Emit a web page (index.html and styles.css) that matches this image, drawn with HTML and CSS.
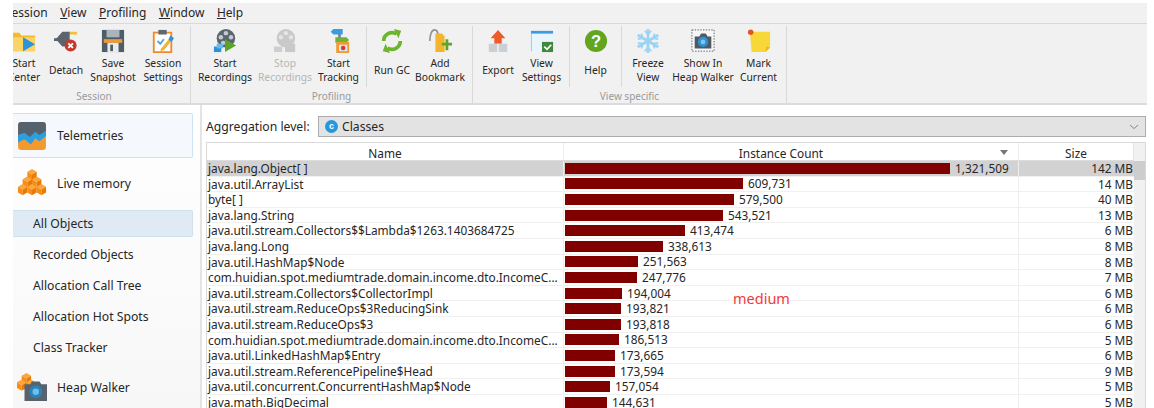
FILE: index.html
```html
<!DOCTYPE html>
<html lang="en">
<head>
<meta charset="utf-8">
<title>Live memory - All Objects</title>
<link rel="stylesheet" href="styles.css">
</head>
<body>
<svg class="defs" width="0" height="0" aria-hidden="true">
  <defs>
    <g id="cube">
      <path d="M0 3l5-3 5 3-5 3z" fill="#fca63e"/>
      <path d="M0 3l5 3v6L0 9z" fill="#f78d14"/>
      <path d="M10 3L5 6v6l5-3z" fill="#e97a08"/>
    </g>
  </defs>
</svg>
<div class="app">
  <nav class="menubar">
    <span class="menu first"><u>S</u>ession</span>
    <span class="menu"><u>V</u>iew</span>
    <span class="menu"><u>P</u>rofiling</span>
    <span class="menu"><u>W</u>indow</span>
    <span class="menu"><u>H</u>elp</span>
  </nav>
  <div class="toolbar">
    <section class="group g-session">
      <div class="tools">
        <div class="tool w48 lead">
          <svg class="ico" viewBox="0 0 26 26"><path d="M0 4h8l2 3h15v17H0z" fill="#f6b92c"/><path d="M0 9h25v15H0z" fill="#fbd468"/><path d="M12 9l13 7.500-13 7.500z" fill="#2c93d8"/></svg>
          <div class="lbl">Start<br>Center</div>
        </div>
        <div class="tool w42">
          <svg class="ico" viewBox="0 0 26 26"><path d="M15 3h10v3H15z" fill="#f0c040"/><path d="M2 11l7-8h8v16H9z" fill="#5b636b"/><path d="M0 10h4v3H0z" fill="#5b636b"/><circle cx="18" cy="18" r="6.500" fill="#c9372c"/><path d="M15.500 15.500l5 5m0-5l-5 5" stroke="#fff" stroke-width="2"/></svg>
          <div class="lbl">Detach</div>
        </div>
        <div class="tool w52">
          <svg class="ico" viewBox="0 0 26 26"><path d="M1 1h24v24H1z" fill="#4e5d68"/><path d="M6 1h14v8H6z" fill="#aab4bb"/><path d="M3 11h20v4H3z" fill="#f29a2e"/><path d="M7 15h12v10H7z" fill="#e8ecee"/><path d="M10 17h3v7h-3z" fill="#4e5d68"/></svg>
          <div class="lbl">Save<br>Snapshot</div>
        </div>
        <div class="tool w48">
          <svg class="ico" viewBox="0 0 26 26"><path d="M3 4h19v21H3z" fill="#fff" stroke="#ee8a2a" stroke-width="2"/><path d="M8 1h9v5H8z" fill="#5d6a73"/><path d="M7 13l3 3 4-5" fill="none" stroke="#56a8d8" stroke-width="2"/><path d="M11 21l9-11 3 2-9 11-4 1z" fill="#f3b23b"/><path d="M19 11l2-4 4 3-3 4z" fill="#2c93d8"/></svg>
          <div class="lbl">Session<br>Settings</div>
        </div>
      </div>
      <div class="grouplabel shift">Session</div>
    </section>
    <section class="group g-profiling">
      <div class="tools">
        <div class="tool w68">
          <svg class="ico" viewBox="0 0 26 26"><circle cx="14" cy="10" r="10" fill="#5a666e"/><circle cx="14" cy="4.500" r="2.400" fill="#c5ccd1"/><circle cx="8.500" cy="9" r="2.400" fill="#c5ccd1"/><circle cx="19.500" cy="9" r="2.400" fill="#c5ccd1"/><circle cx="11" cy="15" r="2.400" fill="#c5ccd1"/><path d="M13 11l12 7-12 7z" fill="#5ba525"/><path d="M1 19h8v6H1z" fill="#2c93d8"/><path d="M4 16h7v5H4z" fill="#6cb8e6"/></svg>
          <div class="lbl">Start<br>Recordings</div>
        </div>
        <div class="tool w52 disabled">
          <svg class="ico" viewBox="0 0 26 26"><circle cx="14" cy="10" r="10" fill="#c9c9c9"/><circle cx="14" cy="4.500" r="2.400" fill="#e4e4e4"/><circle cx="8.500" cy="9" r="2.400" fill="#e4e4e4"/><circle cx="19.500" cy="9" r="2.400" fill="#e4e4e4"/><path d="M1 19h9v6H1z" fill="#cfcfcf"/><path d="M13 16h11v9H13z" fill="#c9c9c9"/></svg>
          <div class="lbl">Stop<br>Recordings</div>
        </div>
        <div class="tool w56 sep">
          <svg class="ico" viewBox="0 0 26 26"><path d="M12 0h3v26h-3z" fill="#7b858c"/><path d="M4 3l3-3h10v6H7z" fill="#3a9be0"/><path d="M9 9h12l3 3-3 3H9z" fill="#6fb23a"/><path d="M10 14h14v12H10z" fill="#f09a35"/><path d="M13 17h9v7h-9z" fill="#d8e6f0"/><circle cx="17.500" cy="20.500" r="2.400" fill="#d9342b"/></svg>
          <div class="lbl">Start<br>Tracking</div>
        </div>
        <div class="tool w50">
          <svg class="ico" viewBox="0 0 26 26"><path d="M4 13a9 9 0 0 1 14-7.500" fill="none" stroke="#6db52d" stroke-width="4"/><path d="M22 13a9 9 0 0 1-14 7.500" fill="none" stroke="#6db52d" stroke-width="4"/><path d="M15 0l8 2-3 8z" fill="#6db52d"/><path d="M11 26l-8-2 3-8z" fill="#6db52d"/></svg>
          <div class="lbl">Run GC</div>
        </div>
        <div class="tool w46">
          <svg class="ico" viewBox="0 0 26 26"><path d="M2 13c0-7 2-12 5-12s4 4 4 7" fill="none" stroke="#8a9399" stroke-width="1.800"/><path d="M8 5h7l3 3v17H8z" fill="#f4b52e"/><path d="M15 15h4v-4h3v4h4v3h-4v5h-3v-5h-4z" fill="#5fa52a"/></svg>
          <div class="lbl">Add<br>Bookmark</div>
        </div>
      </div>
      <div class="grouplabel">Profiling</div>
    </section>
    <section class="group g-view">
      <div class="tools">
        <div class="tool w50">
          <svg class="ico" viewBox="0 0 26 26"><path d="M13 1l8 9h-4v6H9v-6H5z" fill="#ef5a2a"/><path d="M3 16h20v9H3z" fill="#c9cfd2"/><path d="M12 16h2v9h-2z" fill="#e8ecee"/></svg>
          <div class="lbl">Export</div>
        </div>
        <div class="tool w47 sep inset">
          <svg class="ico" viewBox="0 0 26 26"><path d="M1 2h24v22H1z" fill="#e9f5fc"/><path d="M1 2h24v3H1z" fill="#3a9be0"/><path d="M1 5h1v19H1z" fill="#8ccaee"/><path d="M13 14h12v11H13z" fill="#3f8a3a"/><path d="M15.500 19l3 3 4.500-5" fill="none" stroke="#fff" stroke-width="1.800"/></svg>
          <div class="lbl">View<br>Settings</div>
        </div>
        <div class="tool w52 sep">
          <svg class="ico" viewBox="0 0 26 26"><circle cx="13" cy="13" r="12" fill="#63a61e"/><text class="qm" x="13" y="19" text-anchor="middle">?</text></svg>
          <div class="lbl">Help</div>
        </div>
        <div class="tool w52">
          <svg class="ico" viewBox="0 0 26 26"><g stroke="#9ad4f2" stroke-width="3" fill="none"><path d="M13 0v26M1.700 6.500l22.600 13M1.700 19.500l22.600-13"/><path d="M9.500 2l3.500 3.500L16.500 2M9.500 24l3.500-3.500 3.500 3.500M2 11l5-1-1-5M24 15l-5 1 1 5M2 15l5 1-1 5M24 11l-5-1 1-5" stroke-width="2"/></g></svg>
          <div class="lbl">Freeze<br>View</div>
        </div>
        <div class="tool w58">
          <svg class="ico" viewBox="0 0 26 26"><rect x="1" y="1" width="24" height="23" fill="#f6f6f6" stroke="#555" stroke-dasharray="1.500 1.500"/><path d="M4 8h5l2-3h5l2 3h4v13H4z" fill="#4d5a64"/><circle cx="13" cy="14" r="5.500" fill="#2c93d8"/><circle cx="13" cy="14" r="2.500" fill="#7cc6f0"/></svg>
          <div class="lbl">Show In<br>Heap Walker</div>
        </div>
        <div class="tool w53">
          <svg class="ico" viewBox="0 0 26 26"><path d="M3 3h22v17l-5 5H5z" fill="#f8d838"/><path d="M20 25l1-6 4 1z" fill="#e8b820"/><circle cx="4" cy="3.500" r="3" fill="#e0562a"/></svg>
          <div class="lbl">Mark<br>Current</div>
        </div>
      </div>
      <div class="grouplabel">View specific</div>
    </section>
  </div>
  <div class="main">
    <aside class="sidebar">
      <div class="side selected">
        <svg class="side-ico" viewBox="0 0 28 28"><rect x="1" y="1" width="26" height="26" rx="3" fill="#f29a2e"/><path d="M1 4a3 3 0 0 1 3-3h20a3 3 0 0 1 3 3v9l-5 3-4-3-5 5-5-4-7 3z" fill="#55626c"/><path d="M1 13l6-2 5 4 5-5 4 3 6-4v5l-6 5-4-3-4 6-6-5-6 3z" fill="#2c9fe0"/></svg>
        <span>Telemetries</span>
      </div>
      <div class="side big">
        <svg class="side-ico" viewBox="0 0 32 30"><use href="#cube" x="11" y="0"/><use href="#cube" x="6" y="8"/><use href="#cube" x="16" y="8"/><use href="#cube" x="1" y="16"/><use href="#cube" x="11" y="16"/><use href="#cube" x="21" y="16"/></svg>
        <span>Live memory</span>
      </div>
      <div class="sub current">All Objects</div>
      <div class="sub">Recorded Objects</div>
      <div class="sub">Allocation Call Tree</div>
      <div class="sub">Allocation Hot Spots</div>
      <div class="sub">Class Tracker</div>
      <div class="side heap">
        <svg class="side-ico" viewBox="0 0 32 30"><use href="#cube" x="5" y="0"/><use href="#cube" x="0" y="7"/><use href="#cube" x="10" y="7"/><path d="M8 12h6l2-3h8l2 3h6v18H8z" fill="#56636d"/><circle cx="20" cy="20" r="7" fill="#2c82b8"/><circle cx="20" cy="20" r="3.500" fill="#6cc0ec"/></svg>
        <span>Heap Walker</span>
      </div>
    </aside>
    <main class="content">
      <div class="agg">
        <label class="agg-label">Aggregation level:</label>
        <div class="combo">
          <span class="badge">c</span>
          <span>Classes</span>
          <svg class="chev" viewBox="0 0 10 6"><path d="M1 1l4 3.500L9 1" fill="none" stroke="#888" stroke-width="1"/></svg>
        </div>
      </div>
      <div class="table">
        <div class="cols">
          <div class="head">
            <div class="c-name th">Name</div>
            <div class="c-count th">Instance Count<span class="sort"></span></div>
            <div class="c-size th">Size</div>
          </div>
          <div class="row hot"><div class="c-name">java.lang.Object[ ]</div><div class="c-count"><i class="bar" style="width:385px"></i>1,321,509</div><div class="c-size">142 MB</div></div>
          <div class="row"><div class="c-name">java.util.ArrayList</div><div class="c-count"><i class="bar" style="width:178px"></i>609,731</div><div class="c-size">14 MB</div></div>
          <div class="row"><div class="c-name">byte[ ]</div><div class="c-count"><i class="bar" style="width:169px"></i>579,500</div><div class="c-size">40 MB</div></div>
          <div class="row"><div class="c-name">java.lang.String</div><div class="c-count"><i class="bar" style="width:158px"></i>543,521</div><div class="c-size">13 MB</div></div>
          <div class="row"><div class="c-name">java.util.stream.Collectors$$Lambda$1263.1403684725</div><div class="c-count"><i class="bar" style="width:120px"></i>413,474</div><div class="c-size">6 MB</div></div>
          <div class="row"><div class="c-name">java.lang.Long</div><div class="c-count"><i class="bar" style="width:98px"></i>338,613</div><div class="c-size">8 MB</div></div>
          <div class="row"><div class="c-name">java.util.HashMap$Node</div><div class="c-count"><i class="bar" style="width:73px"></i>251,563</div><div class="c-size">8 MB</div></div>
          <div class="row"><div class="c-name">com.huidian.spot.mediumtrade.domain.income.dto.IncomeC...</div><div class="c-count"><i class="bar" style="width:72px"></i>247,776</div><div class="c-size">7 MB</div></div>
          <div class="row"><div class="c-name">java.util.stream.Collectors$CollectorImpl</div><div class="c-count"><i class="bar" style="width:57px"></i>194,004</div><div class="c-size">6 MB</div></div>
          <div class="row"><div class="c-name">java.util.stream.ReduceOps$3ReducingSink</div><div class="c-count"><i class="bar" style="width:56px"></i>193,821</div><div class="c-size">6 MB</div></div>
          <div class="row"><div class="c-name">java.util.stream.ReduceOps$3</div><div class="c-count"><i class="bar" style="width:56px"></i>193,818</div><div class="c-size">6 MB</div></div>
          <div class="row"><div class="c-name">com.huidian.spot.mediumtrade.domain.income.dto.IncomeC...</div><div class="c-count"><i class="bar" style="width:54px"></i>186,513</div><div class="c-size">5 MB</div></div>
          <div class="row"><div class="c-name">java.util.LinkedHashMap$Entry</div><div class="c-count"><i class="bar" style="width:50px"></i>173,665</div><div class="c-size">6 MB</div></div>
          <div class="row"><div class="c-name">java.util.stream.ReferencePipeline$Head</div><div class="c-count"><i class="bar" style="width:50px"></i>173,594</div><div class="c-size">9 MB</div></div>
          <div class="row"><div class="c-name">java.util.concurrent.ConcurrentHashMap$Node</div><div class="c-count"><i class="bar" style="width:45px"></i>157,054</div><div class="c-size">5 MB</div></div>
          <div class="row"><div class="c-name">java.math.BigDecimal</div><div class="c-count"><i class="bar" style="width:42px"></i>144,631</div><div class="c-size">5 MB</div></div>
        </div>
        <div class="scrollbar"><div class="thumb"></div></div>
        <span class="note">medium</span>
      </div>
    </main>
  </div>
</div>
</body>
</html>
```
FILE: styles.css
```css
html, body { margin: 0; height: 100%; background: #fff; }
body { overflow: hidden; font-family: "Noto Sans", "Open Sans", sans-serif; color: #262626; }
.defs { position: absolute; }
.app { width: 1134px; height: 408px; margin-left: 13px; padding-top: 3px; box-sizing: border-box; overflow: hidden; display: flex; flex-direction: column; }

.menubar { height: 20px; flex: none; display: flex; align-items: center; background: #f1f1f1; border-bottom: 1px solid #d9d9d9; font-size: 12px; line-height: 20px; gap: 12.5px; }
.menu u { text-decoration: underline; }
.menu.first { margin-left: -8px; }

.toolbar { height: 81px; flex: none; display: flex; background: #f1f1f1; border-bottom: 2px solid #dcdcdc; box-sizing: border-box; font-size: 10.3px; line-height: 14px; }
.group { display: flex; flex-direction: column; border-right: 1px solid #d8d8d8; margin-top: 2px; height: 77px; }
.g-session { width: 177px; }
.g-session .tools { margin-left: -16px; }
.g-profiling { width: 281px; }
.g-view { width: 313px; }
.tools { display: flex; height: 62px; }
.tool { flex: none; display: flex; flex-direction: column; align-items: center; box-sizing: border-box; white-space: nowrap; }
.tool.lead { padding-left: 6px; }
.tool.sep { border-right: 1px solid #d8d8d8; }
.tool.inset { padding-right: 9px; }
.disabled { color: #b5b5b5; }
.w42 { width: 42px; } .w46 { width: 46px; } .w47 { width: 47px; } .w48 { width: 48px; } .w50 { width: 50px; } .w52 { width: 52px; } .w53 { width: 53px; } .w56 { width: 56px; } .w58 { width: 58px; } .w68 { width: 68px; }
.ico { width: 24px; height: 24px; flex: none; margin-top: 3px; overflow: hidden; }
.lbl { height: 28px; margin-top: 3px; display: flex; align-items: center; justify-content: center; text-align: center; }
.grouplabel { text-align: center; font-size: 10px; color: #9a9a9a; line-height: 14px; margin-top: 2px; }
.grouplabel.shift { margin-left: -15px; }
.qm { font: 700 18px "Liberation Sans", sans-serif; fill: #fff; }

.main { flex: 1; display: flex; min-height: 0; }
.sidebar { width: 189px; flex: none; background: linear-gradient(#fff, #f7f7f7); border-right: 2px solid #e4e4e4; padding: 8px 7px 0 0; box-sizing: border-box; font-size: 12.2px; display: flex; flex-direction: column; }
.side { display: flex; align-items: center; gap: 10px; padding-left: 4px; }
.side-ico { width: 30px; height: 30px; flex: none; }
.side.selected { height: 45px; box-sizing: border-box; background: #f5f9fd; border: 1px solid #cfe2f1; border-left: 0; border-radius: 0 2px 2px 0; }
.side.big { height: 52px; box-sizing: border-box; padding-bottom: 2px; }
.sub { height: 31px; display: flex; align-items: center; padding-left: 20px; box-sizing: border-box; }
.sub.current { height: 27px; margin-bottom: 2px; background: #dfeaf4; border: 1px solid #cfe0ee; border-left: 0; border-radius: 0 2px 2px 0; }
.side.heap { height: 34px; margin-top: 7px; }

.content { flex: 1; padding: 11px 1px 0 4px; min-width: 0; display: flex; flex-direction: column; gap: 4px; }
.agg { display: flex; align-items: center; gap: 7px; height: 21px; font-size: 12.2px; flex: none; }
.agg-label { width: 105px; flex: none; }
.combo { flex: 1; height: 21px; box-sizing: border-box; background: #e3e3e3; border: 1px solid #adadad; display: flex; align-items: center; gap: 4px; padding: 0 6px; }
.badge { width: 13px; height: 13px; border-radius: 50%; background: #2398e0; color: #fff; font: 700 9px/12px "Liberation Sans", sans-serif; text-align: center; }
.chev { width: 10px; height: 6px; margin-left: auto; }

.table { position: relative; flex: 1; display: flex; min-height: 0; border: 1px solid #d9d9d9; border-bottom: 0; margin-top: 1px; overflow: hidden; }
.cols { flex: 1; min-width: 0; font-size: 11.85px; line-height: 15px; }
.head { display: flex; height: 17px; border-bottom: 1px solid #dcdcdc; background: #fff; }
.th { text-align: center !important; border-right: 1px solid #e4e4e4; line-height: 20px; position: relative; padding: 0 !important; }
.row { display: flex; height: 15.6px; box-sizing: border-box; border-bottom: 1px solid #f0f0f0; white-space: nowrap; }
.row.hot { background: #d2d2d2; }
.c-name { width: 357px; flex: none; padding-left: 1px; box-sizing: border-box; border-right: 1px solid #eee; }
.c-count { width: 455px; flex: none; box-sizing: border-box; border-right: 1px solid #eee; padding-left: 1px; display: flex; align-items: center; gap: 5px; }
.c-size { flex: 1; box-sizing: border-box; text-align: right; padding-right: 1px; }
.th.c-count { display: block; padding-right: 20px !important; }
.bar { display: block; height: 11px; background: #800000; flex: none; }
.sort { position: absolute; right: 10px; top: 7px; border: 4px solid transparent; border-top: 5px solid #777; border-bottom: 0; }
.scrollbar { width: 11px; flex: none; background: #f1f1f1; }
.thumb { height: 19px; margin-top: 18px; background: #cdcdcd; }
.note { position: absolute; left: 526px; top: 146px; font-size: 14.5px; line-height: 18px; color: #f03a3a; }
```
